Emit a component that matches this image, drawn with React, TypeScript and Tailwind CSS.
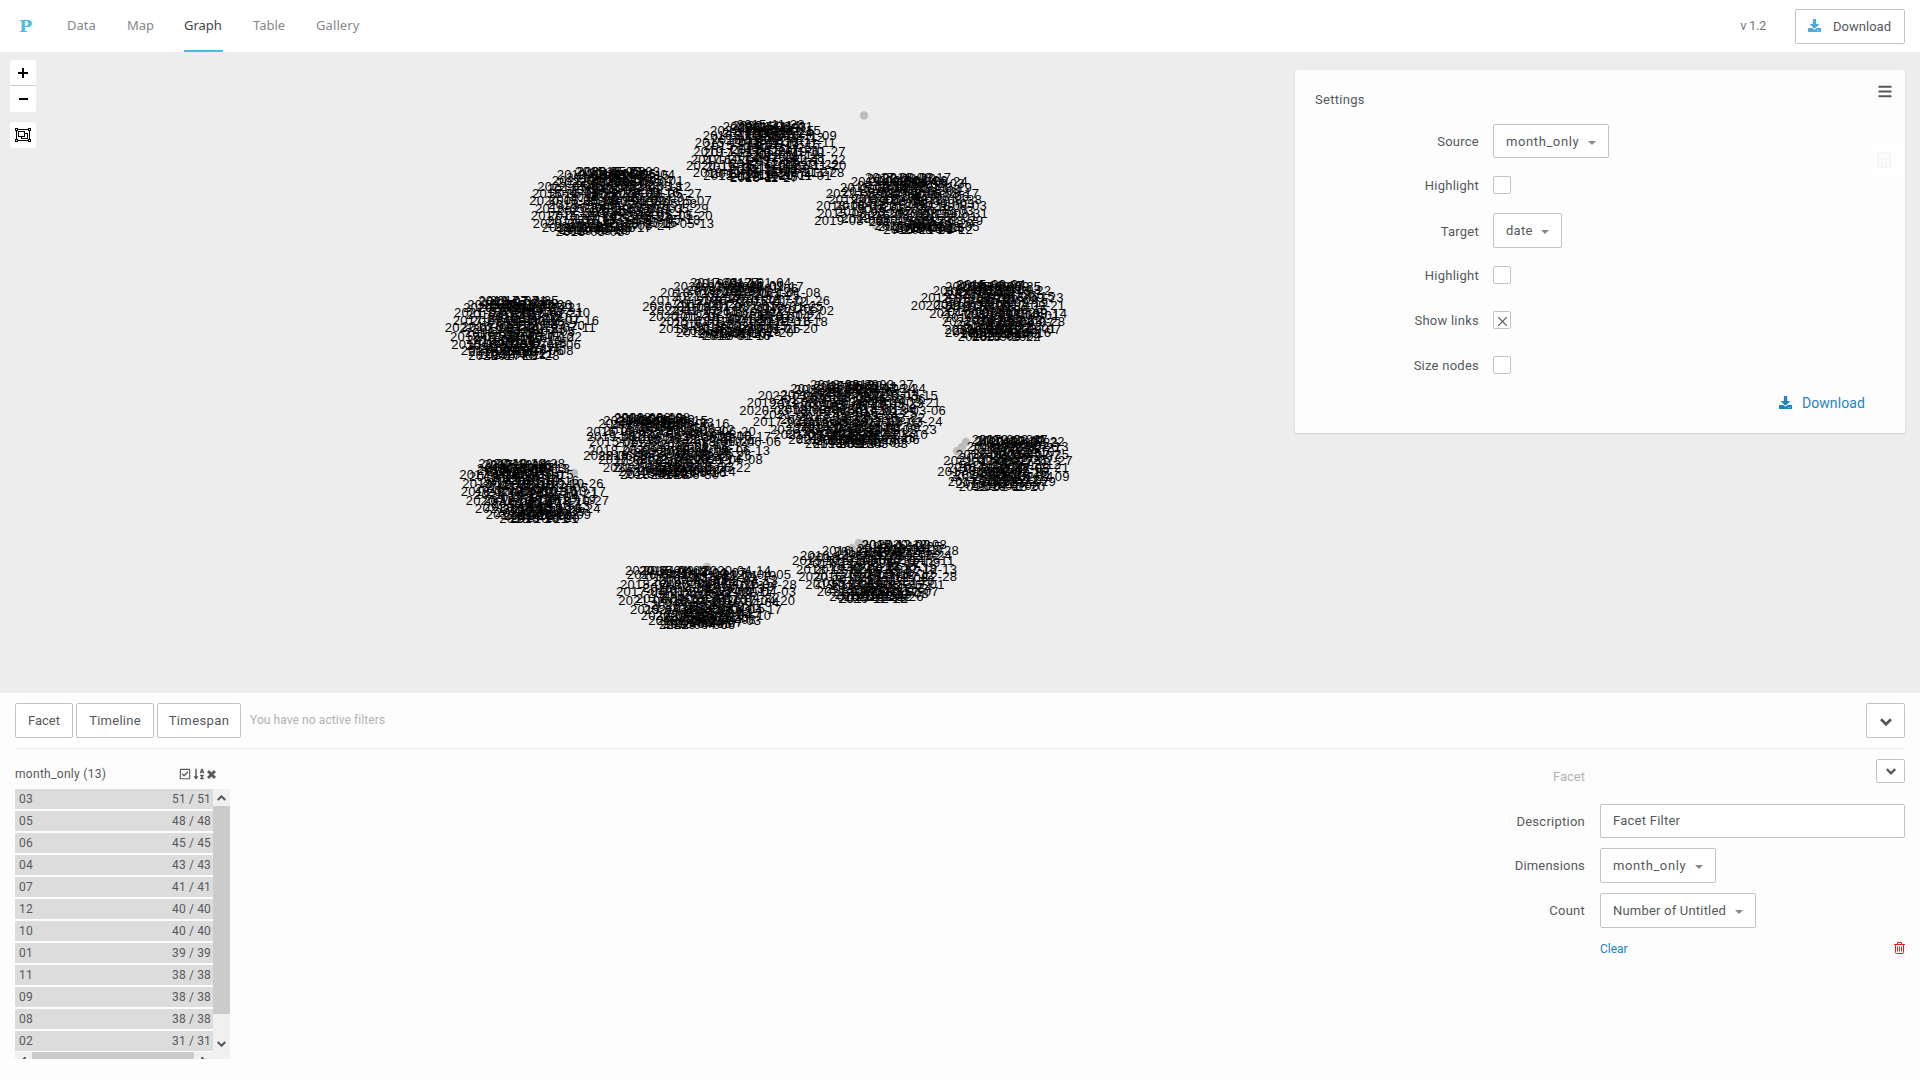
import React from "react";
import { FaDownload, FaBars, FaCalculator, FaRegCheckSquare, FaSortAlphaDown } from "react-icons/fa";

type Row = [y: number, left: number, right: number, leftDate?: string, rightDay?: string];
type Cluster = { ox: number; oy: number; month: string; count: number; rows: Row[] };

// Row outlines are stored in thirds of a pixel relative to (ox, oy).
const clusters: Cluster[] = [
  { ox: 520, oy: 100, month: "11", count: 38, rows: [[73, 650, 836, "2015-11-23", "23"], [80, 608, 876, "2020-11-08", "01"], [92, 570, 900, "2022-11-02", "15"], [105, 548, 948, "2016-11-13", "09"], [126, 524, 948, "2015-11-18", "11"], [155, 520, 974, "2019-11-17", "27"], [177, 512, 974, "2017-11-14", "22"], [195, 498, 976, "2020-11-16", "20"], [217, 518, 970, "2018-11-05", "28"], [226, 550, 932, "2015-11-13", "01"], [232, 630, 820, "2016-11-27", "27"]] },
  { ox: 520, oy: 100, month: "05", count: 48, rows: [[213, 165, 415, "2015-05-21", "03"], [224, 110, 460, "2019-05-09", "04"], [240, 95, 485, "2021-05-19", "01"], [260, 52, 508, "2022-05-02", "12"], [279, 36, 540, "2016-05-10", "27"], [302, 28, 570, "2020-05-25", "07"], [325, 45, 560, "2018-05-13", "29"], [346, 32, 572, "2017-05-22", "20"], [369, 38, 577, "2020-05-01", "13"], [383, 65, 390, "2019-05-23", "17"], [393, 107, 320, "2018-05-08", "28"]] },
  { ox: 780, oy: 100, month: "08", count: 38, rows: [[232, 255, 508, "2017-08-03", "17"], [243, 212, 558, "2019-08-01", "24"], [262, 180, 570, "2015-08-14", "19"], [280, 137, 592, "2022-08-18", "17"], [299, 145, 600, "2019-08-12", "28"], [316, 108, 615, "2018-08-07", "03"], [340, 112, 618, "2015-08-22", "31"], [362, 103, 604, "2019-08-02", "29"], [379, 293, 593, "2020-08-16", "05"], [388, 310, 573, "2016-08-14", "12"]] },
  { ox: 780, oy: 100, month: "09", count: 38, rows: [[552, 530, 740, "2015-09-04", "04"], [558, 495, 778, "2021-09-02", "25"], [572, 458, 808, "2018-09-15", "22"], [591, 422, 845, "2017-09-12", "23"], [616, 392, 850, "2020-09-11", "21"], [640, 448, 856, "2017-09-19", "14"], [665, 485, 850, "2022-09-27", "28"], [687, 493, 838, "2019-09-13", "07"], [697, 495, 808, "2018-09-10", "16"], [708, 533, 776, "2015-09-29", "22"]] },
  { ox: 520, oy: 100, month: "01", count: 39, rows: [[548, 510, 808, "2017-01-27", "04"], [560, 460, 845, "2020-01-06", "17"], [577, 420, 896, "2018-01-14", "08"], [601, 388, 925, "2017-01-10", "26"], [620, 367, 905, "2020-01-08", "25"], [632, 388, 937, "2022-01-12", "02"], [648, 386, 900, "2020-01-31", "24"], [663, 418, 918, "2015-01-12", "18"], [685, 416, 888, "2018-01-13", "20"], [697, 468, 815, "2019-01-07", "20"], [707, 545, 735, "2019-01-16", "16"]] },
  { ox: 430, oy: 280, month: "07", count: 41, rows: [[62, 145, 380, "2019-07-31", "25"], [72, 112, 420, "2018-07-19", "06"], [82, 100, 452, "2020-07-04", "21"], [97, 72, 475, "2021-07-15", "10"], [122, 68, 502, "2017-07-24", "16"], [143, 44, 495, "2022-07-02", "11"], [170, 60, 450, "2019-07-08", "22"], [193, 64, 447, "2015-07-13", "06"], [212, 92, 425, "2017-07-28", "08"], [226, 115, 383, "2020-07-22", "28"]] },
  { ox: 430, oy: 360, month: "06", count: 45, rows: [[172, 553, 775, "2020-06-08", "08"], [180, 520, 828, "2021-06-01", "15"], [190, 505, 893, "2019-06-27", "16"], [214, 468, 972, "2016-06-25", "20"], [228, 470, 1018, "2019-06-13", "17"], [245, 478, 1048, "2015-06-28", "06"], [272, 475, 1015, "2018-06-09", "13"], [285, 460, 960, "2022-06-14", "26"], [299, 505, 993, "2017-06-22", "08"], [322, 518, 957, "2021-06-10", "22"], [335, 565, 912, "2020-06-12", "14"], [343, 570, 862, "2018-06-28", "30"]] },
  { ox: 720, oy: 360, month: "03", count: 51, rows: [[73, 270, 575, "2018-03-20", "27"], [84, 211, 612, "2016-03-12", "24"], [106, 113, 648, "2022-03-05", "15"], [128, 80, 656, "2019-03-08", "21"], [152, 58, 672, "2020-03-03", "06"], [183, 98, 662, "2017-03-11", "24"], [207, 150, 645, "2020-03-17", "23"], [222, 160, 618, "2021-03-14", "10"], [237, 205, 593, "2021-03-18", "06"], [251, 255, 558, "2019-03-13", "03"]] },
  { ox: 430, oy: 360, month: "10", count: 40, rows: [[310, 145, 400, "2020-10-14", "28"], [325, 140, 415, "2019-10-06", "13"], [343, 88, 425, "2017-10-05", "15"], [370, 97, 515, "2018-10-19", "26"], [395, 92, 522, "2016-10-20", "17"], [420, 107, 532, "2020-10-04", "27"], [446, 135, 506, "2021-10-12", "24"], [462, 167, 478, "2022-10-02", "09"], [474, 208, 440, "2018-10-21", "01"]] },
  { ox: 720, oy: 360, month: "02", count: 31, rows: [[238, 755, 977, "2017-02-04", "17"], [243, 762, 1028, "2020-02-19", "22"], [258, 740, 1040, "2019-02-08", "13"], [282, 708, 1042, "2018-02-11", "25"], [300, 670, 1052, "2021-02-06", "27"], [322, 680, 1042, "2016-02-07", "21"], [335, 652, 980, "2017-02-24", "10"], [350, 690, 1043, "2022-02-01", "09"], [365, 683, 1002, "2017-02-12", "29"], [379, 716, 970, "2015-02-15", "20"]] },
  { ox: 720, oy: 360, month: "12", count: 40, rows: [[552, 425, 675, "2017-12-09", "08"], [571, 305, 711, "2016-12-10", "28"], [586, 240, 690, "2016-12-17", "24"], [602, 216, 700, "2015-12-21", "11"], [627, 228, 706, "2018-12-02", "13"], [650, 235, 706, "2020-12-23", "28"], [672, 256, 668, "2019-12-04", "01"], [694, 290, 650, "2021-12-15", "07"], [708, 328, 605, "2015-12-13", "26"], [716, 355, 565, "2020-12-18", "09"]] },
  { ox: 430, oy: 360, month: "04", count: 43, rows: [[630, 638, 840, "2015-04-13", "13"], [632, 585, 1018, "2020-04-09", "14"], [644, 590, 1078, "2016-04-16", "05"], [672, 570, 1095, "2018-04-07", "28"], [694, 558, 1093, "2017-04-21", "03"], [721, 565, 1090, "2021-04-10", "20"], [747, 600, 1050, "2019-04-08", "17"], [767, 632, 1018, "2022-04-12", "10"], [782, 655, 988, "2018-04-02", "03"], [792, 687, 910, "2022-04-06", "06"]] },
];

const LABEL = 67;

type Label = { x: number; y: number; text: string };

// Seeded generator so that the layout is the same on every load.
function rng(seed: number) {
  let s = seed;
  return () => {
    s = (s * 16807) % 2147483647;
    return s / 2147483647;
  };
}

function layout(c: Cluster, index: number): Label[] {
  const rand = rng(977 + index * 7919);
  const date = (day?: string) =>
    `${2015 + Math.floor(rand() * 8)}-${c.month}-${day ?? String(1 + Math.floor(rand() * 28)).padStart(2, "0")}`;
  const out: Label[] = [];
  c.rows.forEach(([y, l, r, left, day]) => {
    const yy = c.oy + y / 3 + 4.7;
    out.push({ x: c.ox + l / 3, y: yy, text: left ?? date() });
    if (r - l > 215) out.push({ x: c.ox + r / 3 - LABEL, y: yy, text: date(day) });
  });
  // The remaining labels are spread evenly in height, inside the interpolated outline.
  const n = c.rows.length;
  const spare = Math.round(c.count * 1.35) - out.length;
  const top = c.rows[0][0];
  const bottom = c.rows[n - 1][0];
  for (let i = 0; i < spare; i++) {
    const y = top + ((i + 0.5) / spare) * (bottom - top);
    const k = Math.max(1, c.rows.findIndex((row) => row[0] >= y));
    const a = c.rows[k - 1];
    const b = c.rows[k];
    const t = (y - a[0]) / (b[0] - a[0]);
    const l = a[1] + (b[1] - a[1]) * t;
    const r = a[2] + (b[2] - a[2]) * t;
    const free = Math.max(0, (r - l) / 3 - LABEL);
    const band = [0.12, 0.55, 0.33, 0.75][i % 4];
    out.push({ x: c.ox + l / 3 + free * (band + rand() * 0.17), y: c.oy + y / 3 + 4.7, text: date() });
  }
  return out;
}

const labels = clusters.flatMap(layout);

const nodes: [number, number][] = [
  [864, 115.5], [637, 221], [643, 217], [630, 225], [733, 317], [746, 317], [739, 308], [750, 310], [876, 226], [880, 221],
  [574, 473], [577, 484], [572, 490], [966, 442], [957, 451], [962, 447], [859, 543], [864, 545], [852, 548], [707, 567], [716, 600],
  [560, 329], [566, 322], [563, 340], [832, 404], [836, 410], [848, 412], [818, 412], [700, 431], [707, 437], [690, 434],
  [790, 161], [748, 149], [958, 204], [964, 309], [951, 306], [853, 570], [859, 575], [503, 492], [516, 497],
];
const links: [number, number, number, number][] = [
  [630, 220, 652, 218], [733, 306, 752, 322], [750, 308, 734, 324], [728, 314, 760, 312], [676, 438, 704, 440], [690, 446, 708, 434],
  [832, 408, 846, 420], [820, 412, 842, 416], [500, 491, 514, 494], [862, 566, 868, 580], [570, 316, 560, 332], [704, 598, 720, 604],
];

function Graph() {
  return (
    <svg className="block h-[641px] w-full" viewBox="0 52 1920 641">
      {nodes.map(([x, y], i) => <circle key={i} cx={x} cy={y} r="4.2" fill="#bdbdbd" />)}
      {links.map(([a, b, c, d], i) => <line key={i} x1={a} y1={b} x2={c} y2={d} stroke="#fafafa" strokeWidth="1.3" />)}
      <g fill="#000" className="font-['Liberation_Sans',sans-serif] text-[13px]">
        {labels.map((l, i) => <text key={i} x={l.x} y={l.y}>{l.text}</text>)}
      </g>
    </svg>
  );
}

function Chevron({ className }: { className: string }) {
  return (
    <svg className={className} viewBox="0 0 12 8" fill="none" stroke="currentColor" strokeWidth="2.8">
      <path d="M1 1.2L6 6.2L11 1.2" />
    </svg>
  );
}

const box = "rounded-[2px] border border-[#c1c3c4] bg-white";

function Select({ label, className }: { label: string; className: string }) {
  return (
    <div className={`${box} flex shrink-0 items-center justify-between pl-3 pr-3 pt-px ${className}`}>
      <span>{label}</span>
      <svg className="mt-0.5 h-1 w-2" viewBox="0 0 8 4"><path d="M0 0h8L4 4z" fill="#85898b" /></svg>
    </div>
  );
}

function Check({ on }: { on?: boolean }) {
  return (
    <div className={`${box} flex h-[18px] w-[18px] items-center justify-center`}>
      {on && <svg className="mt-0.5 h-[9px] w-[9px]" viewBox="0 0 9 9"><path d="M0 0L9 9M9 0L0 9" stroke="#555" strokeWidth="1.2" /></svg>}
    </div>
  );
}

function SettingRow({ label, children, className }: { label: string; children: React.ReactNode; className: string }) {
  return (
    <div className={`flex items-center ${className}`}>
      <span className="w-[184px] pt-0.5 text-right">{label}</span>
      <div className="ml-3.5">{children}</div>
    </div>
  );
}

const facets = [["03", 51], ["05", 48], ["06", 45], ["04", 43], ["07", 41], ["12", 40], ["10", 40], ["01", 39], ["11", 38], ["09", 38], ["08", 38], ["02", 31]] as const;

export default function App() {
  return (
    <div className="flex h-[1080px] w-[1920px] flex-col overflow-hidden bg-[#fdfdfd] font-['Roboto',sans-serif] text-[13px] leading-4 tracking-[0.25px] text-[#55595c]">
      <header className="flex h-[52px] shrink-0 items-center bg-white pl-[19px] pr-[15px]">
        <span className="w-[48px] font-['DejaVu_Serif',serif] text-[17.5px] font-bold leading-5 tracking-normal text-[#4bbbe6]">P</span>
        <nav className="flex h-full gap-[31px] font-['Noto_Sans',sans-serif] tracking-normal text-[#85898b]">
          <span className="flex h-full w-[29px] items-center pb-0.5">Data</span>
          <span className="flex h-full w-[27px] items-center pb-0.5">Map</span>
          <span className="-mx-px flex h-full w-[39px] items-center border-b-2 border-[#4bbbe6] text-[#3f4447]">Graph</span>
          <span className="flex h-full w-[32px] items-center pb-0.5">Table</span>
          <span className="flex h-full items-center pb-0.5 tracking-[0.1px]">Gallery</span>
        </nav>
        <span className="ml-auto mr-[29px] tracking-[-0.35px] text-[#75797c]">v 1.2</span>
        <div className={`${box} flex h-[35px] w-[110px] items-center pl-3`}>
          <FaDownload className="mb-0.5 mr-3 h-[13px] w-[13px] text-[#4ba9dc]" />
          <span className="pt-px tracking-[0.02px]">Download</span>
        </div>
      </header>

      <main className="relative h-[641px] shrink-0 bg-[#ededed]">
        <Graph />
        <div className="absolute left-[10px] top-2 flex flex-col">
          <div className="flex h-[26px] w-[26px] items-center justify-center rounded-t-[2px] border-b border-[#ccc] bg-white">
            <svg className="h-[10px] w-[10px]" viewBox="0 0 10 10"><path d="M5 0v10M0 5h10" stroke="#000" strokeWidth="2" /></svg>
          </div>
          <div className="flex h-[26px] w-[26px] items-center justify-center rounded-b-[2px] bg-white">
            <svg className="ml-px h-[10px] w-[9px]" viewBox="0 0 9 10"><path d="M0 5h9" stroke="#000" strokeWidth="2" /></svg>
          </div>
          <div className="mt-[10px] flex h-[26px] w-[26px] items-center justify-center rounded-[2px] bg-white">
            <svg className="h-[14px] w-4" viewBox="0 0 16 14" fill="none" stroke="#000" shapeRendering="crispEdges">
              <path d="M1.5 1.5h13v11h-13zM3.5 3.5h6v5h-6zM9.5 5.5h3v5h-6v-2" />
              <g fill="#fff"><path d="M.5 .5h2v2h-2zM13.5 .5h2v2h-2zM.5 11.5h2v2h-2zM13.5 11.5h2v2h-2z" /></g>
            </svg>
          </div>
        </div>

        <section className="absolute left-[1295px] top-[18px] h-[363px] w-[610px] rounded-[2px] bg-[#fdfdfd] shadow-[0_1px_2px_rgba(0,0,0,0.14)]">
          <div className="flex items-start justify-between pl-5 pr-[13px] pt-[14px]">
            <h2 className="pt-2 tracking-[0.3px]">Settings</h2>
            <FaBars className="h-[15px] w-[14px]" />
          </div>
          <div className="mt-4 flex flex-col">
            <SettingRow label="Source" className="h-[34px]"><Select label="month_only" className="h-[34px] w-[116px] tracking-[0.6px]" /></SettingRow>
            <SettingRow label="Highlight" className="mt-[18px] h-[18px]"><Check /></SettingRow>
            <SettingRow label="Target" className="mt-[19px] h-[35px]"><Select label="date" className="h-[35px] w-[69px]" /></SettingRow>
            <SettingRow label="Highlight" className="mt-[18px] h-[18px]"><Check /></SettingRow>
            <SettingRow label="Show links" className="mt-[27px] h-[18px]"><Check on /></SettingRow>
            <SettingRow label="Size nodes" className="mt-[27px] h-[18px]"><Check /></SettingRow>
          </div>
          <div className="mt-[21px] flex items-center justify-end pr-10 text-[14px] tracking-[0.1px] text-[#1f83c0]">
            <FaDownload className="mb-0.5 mr-[10px] h-[13px] w-[13px]" />Download
          </div>
          <div className="absolute right-0 top-[70px] flex h-10 w-10 items-center justify-center bg-[#fefefe] pr-[3px] text-[#f7f7f7]">
            <FaCalculator className="h-4 w-4" />
          </div>
        </section>
      </main>

      <div className="flex grow flex-col px-[15px] pt-[10px]">
        <div className="flex h-[46px] shrink-0 items-start gap-[3px] border-b border-[#ececec]">
          <div className={`${box} flex h-[35px] w-[58px] items-center justify-center pt-px tracking-[0px]`}>Facet</div>
          <div className={`${box} flex h-[35px] w-[78px] items-center justify-center pt-px`}>Timeline</div>
          <div className={`${box} flex h-[35px] w-[84px] items-center justify-center pt-px tracking-[0.4px]`}>Timespan</div>
          <span className="ml-[6px] mt-[9px] text-[12px] tracking-[0.08px] text-[#b0b2b3]">You have no active filters</span>
          <div className={`${box} ml-auto flex h-[35px] w-[39px] items-center justify-center`}><Chevron className="mt-0.5 h-2 w-3" /></div>
        </div>

        <div className="flex items-start justify-between">
          <div className="mt-4 w-[215px]">
            <div className="flex h-6 items-start">
              <span className="pt-px text-[12px] tracking-[0.3px]">month_only (13)</span>
              <div className="ml-auto mr-[14px] mt-[3px] flex items-center gap-[2px]">
                <FaRegCheckSquare className="h-3 w-3" />
                <FaSortAlphaDown className="h-3 w-3" />
                <svg className="h-[9px] w-[9px]" viewBox="0 0 9 9"><path d="M1 1l7 7M8 1l-7 7" stroke="currentColor" strokeWidth="2.8" /></svg>
              </div>
            </div>
            <div className="flex h-[270px] overflow-hidden">
              <div className="w-[198px]">
                {facets.map(([m, n]) => (
                  <div key={m} className="mb-0.5 flex h-5 items-center justify-between bg-[#dcdcdc] pl-1 pr-0.5 text-[12px] tracking-[0.15px]">
                    <span>{m}</span><span>{n} / {n}</span>
                  </div>
                ))}
                <div className="-mt-px flex h-[17px] bg-[#f0f0f0]">
                  <div className="flex w-[17px] items-center justify-center"><Chevron className="h-[6px] w-[9px] rotate-90" /></div>
                  <div className="w-[162px] bg-[#cbcbcb]" />
                  <div className="flex grow items-center justify-center"><Chevron className="h-[6px] w-[9px] -rotate-90" /></div>
                </div>
              </div>
              <div className="flex w-[17px] flex-col items-center bg-[#f0f0f0]">
                <div className="flex h-[17px] items-center"><Chevron className="h-[6px] w-[9px] rotate-180" /></div>
                <div className="h-[208px] w-full bg-[#cbcbcb]" />
                <div className="mt-[25px] flex h-[10px] items-center"><Chevron className="h-[6px] w-[9px]" /></div>
              </div>
            </div>
          </div>

          <div className="mt-[10px] flex w-[400px] flex-col">
            <div className="flex h-[45px] items-start justify-between">
              <span className="w-20 pt-[10px] text-right tracking-normal text-[#b0b2b3]">Facet</span>
              <div className={`${box} flex h-6 w-[29px] items-center justify-center`}><Chevron className="h-[7px] w-[10px]" /></div>
            </div>
            <div className="flex h-[34px] items-center">
              <span className="w-20 pt-px text-right">Description</span>
              <div className={`${box} ml-[15px] flex h-[34px] w-[305px] items-center pl-3`}>Facet Filter</div>
            </div>
            <div className="mt-[10px] flex h-[35px] items-center">
              <span className="w-20 pt-px text-right tracking-[0.2px]">Dimensions</span>
              <Select label="month_only" className="ml-[15px] h-[35px] w-[116px] tracking-[0.6px]" />
            </div>
            <div className="mt-[10px] flex h-[35px] items-center">
              <span className="w-20 pt-px text-right">Count</span>
              <Select label="Number of Untitled" className="ml-[15px] h-[35px] w-[156px] tracking-[0.2px]" />
            </div>
            <div className="mt-[13px] flex items-center justify-between pl-[95px]">
              <span className="text-[12px] tracking-normal text-[#1f83c0]">Clear</span>
              <svg className="mb-0.5 h-[12px] w-[11px] text-[#e02020]" viewBox="0 0 11 12" fill="none" stroke="currentColor">
                <path d="M0 2.5h11M3.5 2V.5h4V2M1.5 3v7.5q0 1 1 1h6q1 0 1-1V3M3.5 4.5v5M5.5 4.5v5M7.5 4.5v5" />
              </svg>
            </div>
          </div>
        </div>
      </div>
    </div>
  );
}
